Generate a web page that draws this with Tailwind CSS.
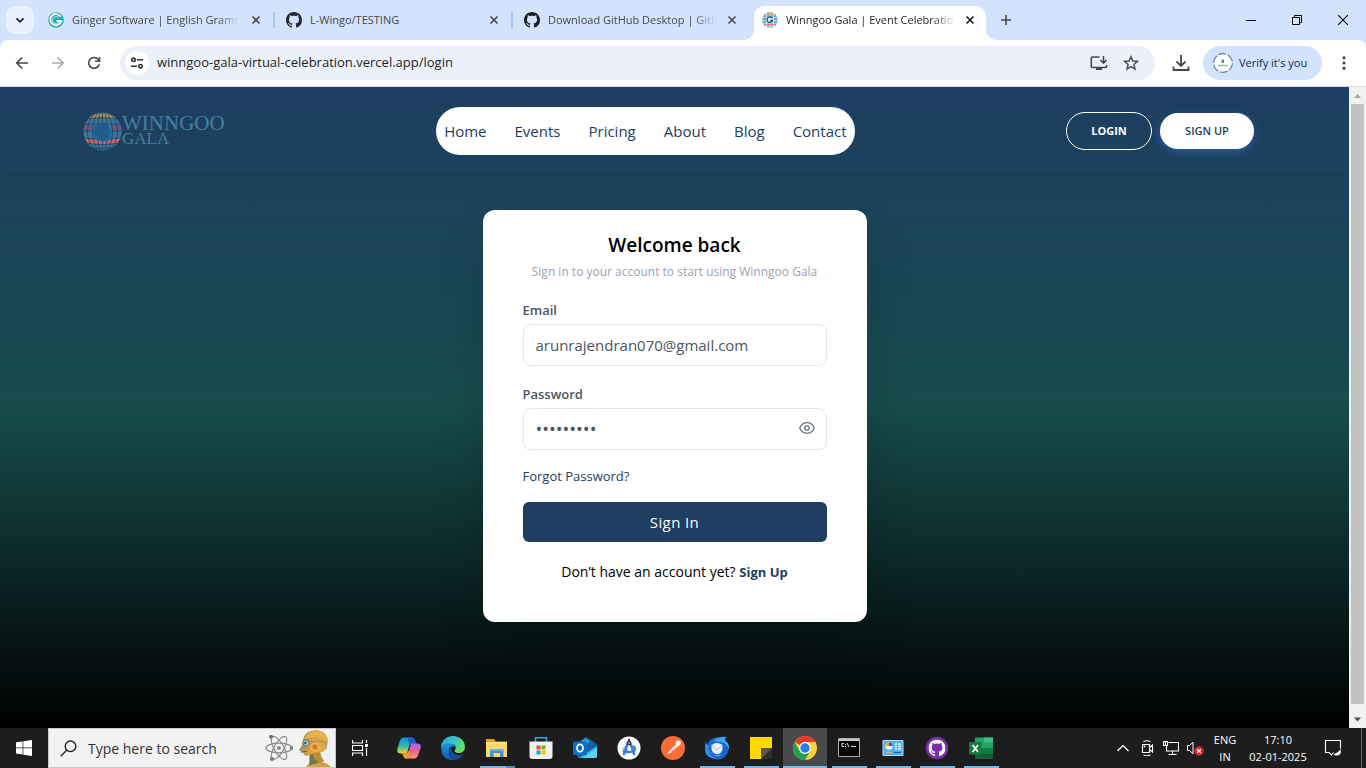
<!DOCTYPE html>
<html lang="en">
<head>
<meta charset="utf-8">
<meta name="viewport" content="width=device-width, initial-scale=1">
<title>Winngoo Gala | Event Celebration</title>
<script src="https://cdn.jsdelivr.net/npm/@tailwindcss/browser@4"></script>
</head>
<body class="flex h-screen flex-col overflow-hidden bg-black font-['Open_Sans','Noto_Sans',sans-serif]">
<svg class="hidden" aria-hidden="true">
  <symbol id="close" viewBox="0 0 16 16"><path d="M4.500 4.500l7 7M11.500 4.500l-7 7" stroke="currentColor" stroke-width="1.600" fill="none"/></symbol>
  <symbol id="github" viewBox="0 0 16 16"><path fill="currentColor" d="M8 0C3.58 0 0 3.58 0 8c0 3.54 2.29 6.53 5.47 7.59.4.07.55-.17.55-.38 0-.19-.01-.82-.01-1.49-2.01.37-2.53-.49-2.69-.94-.09-.23-.48-.94-.82-1.13-.28-.15-.68-.52-.01-.53.63-.01 1.08.58 1.23.82.72 1.21 1.87.87 2.33.66.07-.52.28-.87.51-1.07-1.78-.2-3.64-.89-3.64-3.95 0-.87.31-1.59.82-2.15-.08-.2-.36-1.02.08-2.12 0 0 .67-.21 2.2.82.64-.18 1.32-.27 2-.27s1.36.09 2 .27c1.53-1.04 2.2-.82 2.2-.82.44 1.1.16 1.92.08 2.12.51.56.82 1.27.82 2.15 0 3.07-1.87 3.75-3.65 3.95.29.25.54.73.54 1.48 0 1.07-.01 1.93-.01 2.2 0 .21.15.46.55.38A8.01 8.01 0 0 0 16 8c0-4.42-3.58-8-8-8z"/></symbol>
</svg>

<!-- Tab strip -->
<div class="flex h-10 shrink-0 items-center bg-[#d3e2fd] text-[11px] text-[#474747]">
  <button type="button" aria-label="Search tabs" class="ml-[6px] flex h-7 w-7 items-center justify-center rounded-[9px] bg-[#eaf1fe]">
    <svg class="size-4 text-[#1f1f1f]" viewBox="0 0 16 16"><path d="M4.500 6.300L8 9.800l3.500-3.500" stroke="currentColor" stroke-width="1.800" fill="none"/></svg>
  </button>
  <div class="ml-[3px] flex h-full items-center">
    <div class="flex w-[238px] items-center pl-[11px]">
      <svg class="size-4 shrink-0" viewBox="0 0 16 16"><circle cx="8" cy="8" r="7.800" fill="#26a9b8"/><path d="M12.600 4.600A5.600 5.600 0 1 0 13.300 9H8.500" stroke="#fff" stroke-width="1.800" fill="none"/><path d="M11 6.200A3.500 3.500 0 1 0 11 10" stroke="#fff" stroke-width=".7" fill="none"/></svg>
      <span class="ml-2 w-[168px] overflow-hidden whitespace-nowrap [mask-image:linear-gradient(to_right,#000_146px,transparent_168px)]">Ginger Software | English Grammar</span>
      <button type="button" aria-label="Close tab" class="ml-2 size-4"><svg class="size-4"><use href="#close"/></svg></button>
      <span class="ml-auto h-4 w-[2px] bg-[#a8c7fa]"></span>
    </div>
    <div class="flex w-[238px] items-center pl-[11px]">
      <svg class="size-4 shrink-0 text-[#24292f]"><use href="#github"/></svg>
      <span class="ml-2 w-[168px] overflow-hidden whitespace-nowrap">L-Wingo/TESTING</span>
      <button type="button" aria-label="Close tab" class="ml-2 size-4"><svg class="size-4"><use href="#close"/></svg></button>
      <span class="ml-auto h-4 w-[2px] bg-[#a8c7fa]"></span>
    </div>
    <div class="flex w-[238px] items-center pl-[11px]">
      <svg class="size-4 shrink-0 text-[#1b1f23]"><use href="#github"/></svg>
      <span class="ml-2 w-[168px] overflow-hidden whitespace-nowrap [mask-image:linear-gradient(to_right,#000_146px,transparent_168px)]">Download GitHub Desktop | GitHub</span>
      <button type="button" aria-label="Close tab" class="ml-2 size-4"><svg class="size-4"><use href="#close"/></svg></button>
    </div>
    <div class="relative mx-[3px] mt-[6px] flex h-[34px] w-[232px] items-center rounded-t-[10px] bg-white pb-[6px] pl-2 text-[#1f1f1f]">
      <svg class="absolute bottom-0 -left-[10px] size-[10px]" viewBox="0 0 10 10"><path d="M10 0v10H0A10 10 0 0 0 10 0z" fill="#fff"/></svg>
      <svg class="absolute -right-[10px] bottom-0 size-[10px]" viewBox="0 0 10 10"><path d="M0 0v10h10A10 10 0 0 1 0 0z" fill="#fff"/></svg>
      <svg class="size-4 shrink-0" viewBox="0 0 16 16"><circle cx="8" cy="8" r="7.800" fill="#6fa3c4"/><path d="M3.500 1.800h9l1 2h-11z" fill="#e0a458"/><path d="M1.500 11.500h13l-1.500 2.200H3z" fill="#e0615f"/><path d="M0 5.500h16M0 8.500h16M1 11.200h14M2 14h12M4.500 0v16M8 0v16M11.500 0v16" stroke="#eef4f8" stroke-width=".7"/><circle cx="8" cy="8" r="3.600" fill="#e6f0f6"/><path d="M10.300 6.400A2.800 2.800 0 1 0 10.500 8.500H8" stroke="#1d5f96" stroke-width="1.400" fill="none"/></svg>
      <span class="ml-2 w-[168px] overflow-hidden whitespace-nowrap [mask-image:linear-gradient(to_right,#000_146px,transparent_170px)]">Winngoo Gala | Event Celebration</span>
      <button type="button" aria-label="Close tab" class="ml-2 size-4"><svg class="size-4"><use href="#close"/></svg></button>
    </div>
  </div>
  <button type="button" aria-label="New tab" class="ml-[9px] size-4"><svg class="size-4" viewBox="0 0 16 16"><path d="M8 3v10M3 8h10" stroke="#474747" stroke-width="1.600"/></svg></button>
  <div class="ml-auto flex text-black">
    <button type="button" aria-label="Minimize" class="flex h-10 w-[46px] items-center justify-center"><svg class="size-[10px]" viewBox="0 0 10 10"><path d="M0 5.500h10" stroke="currentColor"/></svg></button>
    <button type="button" aria-label="Restore" class="flex h-10 w-[46px] items-center justify-center"><svg class="size-[10px]" viewBox="0 0 10 10"><path d="M.5 2.500h7v7h-7zM2.500 2.500v-2h7v7h-2" stroke="currentColor" fill="none"/></svg></button>
    <button type="button" aria-label="Close" class="flex h-10 w-[46px] items-center justify-center"><svg class="size-[10px]" viewBox="0 0 10 10"><path d="M0 0l10 10M10 0L0 10" stroke="currentColor" stroke-width="1.100"/></svg></button>
  </div>
</div>

<!-- Toolbar -->
<div class="shrink-0 bg-[#d3e2fd]">
<div class="flex h-[47px] items-center rounded-t-[8px] border-b border-[#dadce0] bg-white pr-[14px] pl-[14px] text-[#474747]">
  <button type="button" aria-label="Back" class="size-4"><svg class="size-4" viewBox="0 0 16 16"><path d="M14 8H3M8.200 2.500L2.700 8l5.500 5.500" stroke="currentColor" stroke-width="1.600" fill="none"/></svg></button>
  <button type="button" aria-label="Forward" class="ml-5 size-4 text-[#aaaaaa]"><svg class="size-4" viewBox="0 0 16 16"><path d="M2 8h11M7.800 2.500L13.300 8l-5.500 5.500" stroke="currentColor" stroke-width="1.600" fill="none"/></svg></button>
  <button type="button" aria-label="Reload" class="ml-5 size-4"><svg class="size-4" viewBox="0 0 16 16"><path d="M13.300 9.200A5.400 5.400 0 1 1 12.300 4.500L13.300 6" stroke="currentColor" stroke-width="1.600" fill="none"/><path d="M9 6.200h4.500V2" stroke="currentColor" stroke-width="1.600" fill="none"/></svg></button>
  <div class="ml-[18px] flex h-[34px] flex-1 items-center rounded-full bg-[#ebf0fa] pr-4 pl-[5px]">
    <button type="button" aria-label="View site information" class="flex size-6 shrink-0 items-center justify-center rounded-full bg-white"><svg class="size-[14px]" viewBox="0 0 14 14"><g stroke="#303030" stroke-width="1.600" fill="none"><circle cx="3.500" cy="3.800" r="1.700"/><path d="M7 3.800h6M1 10.200h6"/><circle cx="10.500" cy="10.200" r="1.700"/></g></svg></button>
    <input type="text" aria-label="Address and search bar" value="winngoo-gala-virtual-celebration.vercel.app/login" class="ml-2 min-w-0 flex-1 bg-transparent text-[13px] text-[#1f1f1f] outline-none">
    <button type="button" aria-label="Install app" class="size-[18px]"><svg class="size-[18px]" viewBox="0 0 18 18"><path d="M9.500 3H2.300Q1.300 3 1.300 4v8.500q0 1 1 1h13.400q1 0 1-1V11M13.500 2v7M10.500 6l3 3 3-3" stroke="currentColor" stroke-width="1.600" fill="none"/><path d="M6 13.500h6v2.500H6z" fill="currentColor"/></svg></button>
    <button type="button" aria-label="Bookmark this tab" class="ml-[15px] size-4"><svg class="size-4" viewBox="0 0 16 16"><path d="M8 1.700l1.800 4.300 4.700.4-3.600 3.100 1.100 4.500L8 11.600 4 14l1.100-4.500L1.500 6.400l4.700-.4z" stroke="currentColor" stroke-width="1.400" fill="none"/></svg></button>
  </div>
  <button type="button" aria-label="Downloads" class="ml-[17px] size-[18px]"><svg class="size-[18px]" viewBox="0 0 18 18"><path d="M9 1v10.500M4.500 7.500L9 12l4.500-4.500M1.500 12.500V16h15v-3.500" stroke="currentColor" stroke-width="1.800" fill="none"/></svg></button>
  <button type="button" class="ml-[13px] flex h-[34px] w-[119px] items-center rounded-full bg-[#d3e2fd] pl-[10px] text-[11px] whitespace-nowrap text-[#0a2a5e]">
    <svg class="size-5" viewBox="0 0 20 20"><circle cx="10" cy="10" r="9.500" fill="#fff"/><circle cx="10" cy="10" r="9.300" fill="none" stroke="#5b7fb5" stroke-width="1.200" stroke-dasharray="8 1.700"/><path d="M8.500 6.500h2.500v3.500H8.500z" fill="#5b84b0"/><path d="M5 12.500h10" stroke="#8cc4a4" stroke-width="1.500"/></svg>
    <span class="ml-[6px]">Verify it's you</span>
  </button>
  <button type="button" aria-label="Menu" class="ml-[14px] size-4"><svg class="size-4" viewBox="0 0 16 16" fill="currentColor"><circle cx="8" cy="2.800" r="1.600"/><circle cx="8" cy="8" r="1.600"/><circle cx="8" cy="13.200" r="1.600"/></svg></button>
</div>
</div>

<!-- Page -->
<div class="flex min-h-0 flex-1">
  <div class="min-w-0 flex-1 overflow-hidden bg-linear-to-b/srgb from-[#1e3e62] via-[#184c4c] to-black">
    <header class="flex h-[88px] items-center justify-between pr-[95px] pl-[83px] shadow-sm">
      <a href="#" aria-label="Winngoo Gala" class="flex items-center text-[#467f9f]">
        <svg class="size-[39px]" viewBox="0 0 39 39">
          <defs><clipPath id="globe"><circle cx="19.500" cy="19.500" r="19"/></clipPath></defs>
          <g clip-path="url(#globe)">
            <rect width="39" height="39" fill="#3a779b"/>
            <path d="M7 2.500q12.500-2 25 0V7q-12.500-2.500-25 0z" fill="#b58c4e"/>
            <path d="M0 12.500h10v6H0zM28 12.500h11v6H28z" fill="#6c5880"/>
            <path d="M0 25.500q19.500 4 39 0v5q-19.500 4-39 0z" fill="#c7646c"/>
            <g stroke="#1e4162" stroke-width=".8" fill="none"><path d="M0 7q19.500-3 39 0M0 12.500q19.500-2 39 0M0 19h39M0 25.500q19.500 4 39 0M0 30.500q19.500 4 39 0M0 35q19.500 3 39 0M19.500 0v39"/><ellipse cx="19.500" cy="19.500" rx="5" ry="21"/><ellipse cx="19.500" cy="19.500" rx="10" ry="21"/><ellipse cx="19.500" cy="19.500" rx="15" ry="20.500"/></g>
          </g>
          <circle cx="19.500" cy="19.500" r="8" fill="#235a86"/>
          <path d="M28 12.500q-8-3.500-13 .5-5.500 5-1.500 11 5 5.500 11.500 1.500v-4.500h-6q2-3 8.500-3v9.500q-8 4-14.500-.5-6-6.500-.5-13.500 6.500-6 15.500-1z" fill="#16689f"/>
        </svg>
        <span class="flex flex-col font-['Liberation_Serif',serif]"><span class="text-[21px] leading-4">WINNGOO</span><span class="text-[17px] leading-4">GALA</span></span>
      </a>
      <nav class="flex h-12 items-center gap-7 rounded-full bg-white px-2 text-[15px] text-[#1e3e62]">
        <a href="#">Home</a><a href="#">Events</a><a href="#">Pricing</a><a href="#">About</a><a href="#">Blog</a><a href="#">Contact</a>
      </nav>
      <div class="flex items-center gap-2 text-[11px]">
        <button type="button" class="h-[38px] w-[86px] rounded-full border border-white font-bold text-white">LOGIN</button>
        <button type="button" class="h-9 w-[94px] rounded-full bg-white font-semibold text-[#1e3e62] shadow-[0_3px_8px_#2b5c9c]">SIGN UP</button>
      </div>
    </header>
    <main class="flex justify-center pt-[35px]">
      <form class="flex w-full max-w-sm flex-col rounded-xl bg-white px-10 pt-[21px] pb-10 text-[13px] leading-5 shadow-2xl">
        <h1 class="text-center text-[19px] leading-7 font-semibold text-black">Welcome back</h1>
        <p class="mt-[3px] text-center text-[12px] leading-5 text-[#9ca3af]">Sign in to your account to start using Winngoo Gala</p>
        <label for="email" class="mt-[18px] font-semibold text-[#4b5563]">Email</label>
        <input id="email" type="email" value="arunrajendran070@gmail.com" class="mt-1 h-[42px] rounded-lg border border-gray-200 px-3 text-[15px] text-[#4b5563] outline-none">
        <label for="password" class="mt-[18px] font-semibold text-[#4b5563]">Password</label>
        <div class="relative mt-1">
          <input id="password" type="password" value="password1" class="block h-[42px] w-full rounded-lg border border-gray-200 px-3 pr-10 text-[18px] text-[#4b5563] outline-none">
          <button type="button" aria-label="Show password" class="absolute top-3 right-3 size-4 text-[#6b7280]"><svg class="size-4" viewBox="0 0 16 16" fill="none" stroke="currentColor" stroke-width="1.300"><path d="M.7 8Q3 2.700 8 2.700T15.300 8Q13 13.300 8 13.300T.7 8z"/><circle cx="8" cy="8" r="2.200"/></svg></button>
        </div>
        <a href="#" class="mt-4 self-start text-[#1e3e62]">Forgot Password?</a>
        <button type="submit" class="mt-4 h-10 rounded-md bg-[#1e3e62] text-[15px] tracking-wide text-white">Sign In</button>
        <p class="mt-5 text-center text-[14px] leading-5 text-black">Don’t have an account yet? <a href="#" class="text-[13px] font-bold text-[#1e3e62]">Sign Up</a></p>
      </form>
    </main>
  </div>
  <!-- Scrollbar -->
  <div class="flex w-[17px] shrink-0 flex-col items-center bg-[#f1f1f1]">
    <svg class="h-[17px] w-[17px]" viewBox="0 0 17 17"><path d="M5 11l3.500-4 3.500 4z" fill="#a3a3a3"/></svg>
    <div class="mb-[7px] w-[13px] flex-1 bg-[#c1c1c1]"></div>
    <svg class="h-[17px] w-[17px]" viewBox="0 0 17 17"><path d="M5 6.500l3.500 4 3.500-4z" fill="#505050"/></svg>
  </div>
</div>

<!-- Taskbar -->
<div class="flex h-10 shrink-0 bg-[#1d1d1d] text-white">
  <button type="button" aria-label="Start" class="flex w-12 items-center justify-center"><svg class="size-4" viewBox="0 0 16 16" fill="#fff"><path d="M0 2.300l6.600-.9v6.200H0zM7.300 1.300L16 0v7.600H7.300zM0 8.300h6.600v6.200L0 13.600zM7.300 8.300H16V16l-8.700-1.300z"/></svg></button>
  <div class="flex w-72 items-center border border-[#c8c8c8] bg-[#f2f2f2] pl-[11px]">
    <svg class="size-[17px] shrink-0" viewBox="0 0 17 17"><g stroke="#1f1f1f" stroke-width="1.300" fill="none"><circle cx="10.500" cy="6.300" r="5.300"/><path d="M6.700 10.200L.7 16.200"/></g></svg>
    <input type="text" aria-label="Search" placeholder="Type here to search" class="ml-[11px] min-w-0 flex-1 bg-transparent text-[14px] outline-none placeholder:text-[#333333]">
    <svg class="size-7 shrink-0" viewBox="0 0 28 28"><g stroke="#8c8c8c" stroke-width="1.200" fill="none"><ellipse cx="14" cy="14" rx="13" ry="4.800"/><ellipse cx="14" cy="14" rx="13" ry="4.800" transform="rotate(60 14 14)"/><ellipse cx="14" cy="14" rx="13" ry="4.800" transform="rotate(120 14 14)"/></g><circle cx="14" cy="14" r="2" fill="#8a8a8a"/><circle cx="6" cy="2.800" r="2" fill="#7d6b5c"/><circle cx="26.500" cy="14" r="1.800" fill="#5f8377"/><circle cx="7" cy="25" r="2" fill="#6d7d70"/></svg>
    <svg class="mr-1 ml-1 h-[37px] w-[34px] shrink-0 self-end" viewBox="0 0 34 37">
      <defs><linearGradient id="skin" x1="0" y1=".3" x2="1" y2=".5"><stop offset="0" stop-color="#7d8f78"/><stop offset=".45" stop-color="#dfa040"/><stop offset="1" stop-color="#e0ad4c"/></linearGradient></defs>
      <path d="M9 37q1-4 9-5 11-1 16 5z" fill="#d0a04a"/>
      <path d="M12 22l11-1q0 6 4 10-7 3-15 4 1-7 0-13z" fill="#6f7750"/>
      <path d="M15 22l8-1q0 6 4 10l-6 2q-5-5-6-11z" fill="#bd8b33"/>
      <path d="M6 10Q8 0 19 0q12 1 12 12-1 7-5 10l-9 1-7 3q-4-1-4-4l-4-2 3-5z" fill="url(#skin)"/>
      <path d="M8 8q4-8 12-7 10 1 11 10-6-4-13-4-6 0-10 3z" fill="#eab04c"/>
      <circle cx="9" cy="13" r="3.300" fill="#aebfb4" stroke="#5f7a76"/><circle cx="8.300" cy="13" r="1.200" fill="#3e5a5c"/>
      <path d="M12 12l10-1 7 2v6" stroke="#86937b" fill="none"/>
      <circle cx="18" cy="17" r="4" fill="#e2953a" stroke="#f3bc64"/><circle cx="18" cy="17" r="1.800" fill="#bd7428"/>
      <path d="M3.500 22l6-.5" stroke="#4f5c40" fill="none"/>
    </svg>
  </div>
  <button type="button" aria-label="Task view" class="ml-[2px] flex w-11 items-center justify-center"><svg class="size-4" viewBox="0 0 16 16"><path d="M.5 0v3h10V0M.5 16v-3h10v3M.5 5.500h10v5H.5zM14.500 0v3M14.500 8v8" stroke="#fff" stroke-width="1.200" fill="none"/><path d="M13 4h3v3h-3z" fill="#fff"/></svg></button>
  <div class="ml-[5px] flex">
    <!-- Copilot -->
    <button type="button" aria-label="Copilot" class="flex w-11 items-center justify-center"><svg class="size-6" viewBox="0 0 24 24"><defs><linearGradient id="cp1" x1="0" y1="0" x2="0" y2="1"><stop offset="0" stop-color="#1a8be6"/><stop offset=".5" stop-color="#25b7b0"/><stop offset="1" stop-color="#ecd832"/></linearGradient><linearGradient id="cp2" x1="0" y1="0" x2="0" y2="1"><stop offset="0" stop-color="#a56bea"/><stop offset=".5" stop-color="#ee5c9c"/><stop offset="1" stop-color="#f79e55"/></linearGradient></defs><path d="M7 1.500h8q2 0 3 3l1 3h-4q-2 0-3 3l-2 7H4q-5 0-3.500-5L3 4.500Q4 1.500 7 1.500z" fill="url(#cp1)"/><path d="M15 1.500q2 0 3 3l1 3h-4q-2 0-3 2 0-6-2-8z" fill="#205cd8"/><path d="M17 22.500H9q-2 0-3-4l-1-1h4q2 0 3-3l2-7h6q5 0 3.500 5L21 19.500q-1 3-4 3z" fill="url(#cp2)"/><path d="M5 17.500h4q2 0 3-3 0 6-2 8-3 0-4-3z" fill="#f39b30"/></svg></button>
    <!-- Edge -->
    <button type="button" aria-label="Edge" class="flex w-11 items-center justify-center"><svg class="size-6" viewBox="0 0 24 24"><defs><linearGradient id="ed1" x1="0" y1="0" x2="1" y2=".5"><stop offset="0" stop-color="#2aa5df"/><stop offset=".55" stop-color="#36c6c3"/><stop offset="1" stop-color="#69df5f"/></linearGradient><linearGradient id="ed2" x1="0" y1="0" x2="0" y2="1"><stop offset="0" stop-color="#2392dc"/><stop offset="1" stop-color="#1157a8"/></linearGradient></defs><path d="M0 12C0 5 5 0 12 0s12 5 12 11c0 4-3 6-6 6-4 0-5-2-4-3 2-3 0-6-4-6-5 0-9 2-10 4z" fill="url(#ed1)"/><path d="M0 12q2-5 7-5 5 0 7 4-5-2-6 3-1 6 5 10Q1 25 0 12z" fill="url(#ed2)"/><path d="M8 14q0-3 3-4-2 7 5 9 4 1 7-2-3 7-10 7-5-3-5-10z" fill="#124f91"/></svg></button>
    <!-- File Explorer -->
    <button type="button" aria-label="File Explorer" class="relative flex w-11 items-center justify-center"><svg class="size-6" viewBox="0 0 24 24"><path d="M1 3h8l2 2.500h11V10H1z" fill="#dda11d"/><path d="M1 6h21v15H1z" fill="#ffd869"/><path d="M1 6h21v2H1z" fill="#ffe38c"/><path d="M5 13h13.500v8H15v-4H8.500v4H5z" fill="#3e92d2"/><path d="M5 13h13.500v2H5z" fill="#63b2ea"/></svg><span class="absolute bottom-0 left-[5px] flex h-[2px] w-[35px] bg-[#5a8bbb]"><span class="w-[26px] bg-[#76b9ed]"></span></span></button>
    <!-- Store -->
    <button type="button" aria-label="Microsoft Store" class="flex w-11 items-center justify-center"><svg class="size-6" viewBox="0 0 24 24"><path d="M6.500 6V1.700h11V6" stroke="#32abdc" stroke-width="1.500" fill="none"/><path d="M.5 5.500h23V20q0 3-3 3h-17q-3 0-3-3z" fill="#f1f1f1"/><path d="M7.500 9.500h4v4h-4z" fill="#f04e23"/><path d="M12.500 9.500h4v4h-4z" fill="#79b80a"/><path d="M7.500 14.500h4v4h-4z" fill="#08a2ee"/><path d="M12.500 14.500h4v4h-4z" fill="#fcb805"/></svg></button>
    <!-- Outlook -->
    <button type="button" aria-label="Outlook" class="flex w-11 items-center justify-center"><svg class="size-6" viewBox="0 0 24 24"><path d="M4 7l9-6 11 7v12q0 2-2 2H6q-2 0-2-2z" fill="#155fa8"/><path d="M12 2l5 3-9 12-3-9z" fill="#2f93d7"/><path d="M24 8v12q0 2-2 2H6l18-12z" fill="#39b8ee"/><path d="M24 12v8q0 2-2 2H10z" fill="#57d5f8"/><rect y="5.500" width="14" height="13.500" rx="1.500" fill="#0f6cc6"/><ellipse cx="7" cy="12" rx="3" ry="3.700" stroke="#fff" stroke-width="1.700" fill="none"/></svg></button>
    <!-- Android Studio -->
    <button type="button" aria-label="Android Studio" class="flex w-11 items-center justify-center"><svg class="size-6" viewBox="0 0 24 24"><circle cx="12" cy="12" r="11.500" fill="#fff"/><path d="M5 12l3-2.500 3 2.500v6H6z" fill="#b9d7fb"/><path d="M16 9q4 1 3 6l-4-1z" fill="#34a866"/><path d="M11 6.500L6.500 19M13 6.500L17.500 19M6 14.500q6 3 12 0" stroke="#3c79e5" stroke-width="2.400" fill="none"/><circle cx="12" cy="7" r="2.300" fill="#293444"/><path d="M12 3v2" stroke="#293444" stroke-width="2"/><circle cx="12" cy="7" r=".8" fill="#fff"/></svg></button>
    <!-- Postman -->
    <button type="button" aria-label="Postman" class="flex w-11 items-center justify-center"><svg class="size-6" viewBox="0 0 24 24"><circle cx="12" cy="12" r="12" fill="#ff6c37"/><path d="M5 19l3-3.500 8-8 2 2-8 7z" fill="#fff"/><circle cx="17.300" cy="7" r="2.500" fill="#fff"/><path d="M5 19.500l4-2M10 16l6-6" stroke="#ff6c37" stroke-width=".7"/></svg></button>
    <!-- Thunderbird -->
    <button type="button" aria-label="Thunderbird" class="relative flex w-11 items-center justify-center"><svg class="size-6" viewBox="0 0 24 24"><circle cx="12.500" cy="12.500" r="11" fill="#1a66cc"/><path d="M8 5q5-5 14-4-2 1-2 3 5 4 4 10-3-9-11-8z" fill="#3ba0f2"/><path d="M1 5q0 4 3 5-2 9 7 13Q-1 22 0 11q0-3 1-6z" fill="#2c8ff0"/><path d="M6.500 9q5.500-4 11 0v4q-1 5-5.500 5t-5.500-5z" fill="#e8f2fc"/><path d="M6.500 9l5.500 5 5.500-5" stroke="#9bc3e8" fill="none"/><path d="M4 14q3 8 13 4-6 6-13-4z" fill="#5bb5f5"/></svg><span class="absolute bottom-0 left-[5px] h-[2px] w-[35px] bg-[#76b9ed]"></span></button>
    <!-- Sticky Notes -->
    <button type="button" aria-label="Sticky Notes" class="relative flex w-11 items-center justify-center"><svg class="size-6" viewBox="0 0 24 24"><path d="M1 1h22v22H1z" fill="#ffd900"/><path d="M12 12h11v11H12z" fill="#4a463c"/><path d="M23 12v11H12z" fill="#302e2b"/><path d="M12 12h11L12 23z" fill="#5b564a"/></svg><span class="absolute bottom-0 left-[5px] h-[2px] w-[35px] bg-[#76b9ed]"></span></button>
    <!-- Chrome -->
    <button type="button" aria-label="Chrome" class="relative flex w-11 items-center justify-center bg-[#4a4a4a]"><svg class="size-6" viewBox="0 0 24 24"><circle cx="12" cy="12" r="12" fill="#ffcd40"/><path d="M12 12L1.600 6A12 12 0 0 1 22.400 6H12z" fill="#e33b2e"/><path d="M1.600 6A12 12 0 0 0 12 24l5.200-9L12 12 6.800 15z" fill="#1fa055"/><circle cx="12" cy="12" r="6" fill="#fff"/><circle cx="12" cy="12" r="4.700" fill="#287ee8"/></svg><span class="absolute bottom-0 left-0 h-[2px] w-full bg-[#76b9ed]"></span></button>
    <!-- Command Prompt -->
    <button type="button" aria-label="Command Prompt" class="relative flex w-11 items-center justify-center"><svg class="size-6" viewBox="0 0 24 24"><path d="M1.500 2.500h21v18h-21z" fill="#050505" stroke="#a7adb3"/><path d="M2 3h20v2H2z" fill="#c5cbd0"/><path d="M7 7.500H5v3h2M8.500 8v1M8.500 10v1M10 7l2 4M14 10.500h5" stroke="#e2e2e2" fill="none"/></svg><span class="absolute bottom-0 left-[5px] h-[2px] w-[35px] bg-[#76b9ed]"></span></button>
    <!-- Control Panel -->
    <button type="button" aria-label="Control Panel" class="relative flex w-11 items-center justify-center"><svg class="size-6" viewBox="0 0 24 24"><path d="M2 4.500h20v15H2z" fill="#4eb3f0" stroke="#a6dcfa"/><circle cx="8" cy="10" r="3.700" fill="#ecf7ff"/><path d="M8 10V6.300a3.700 3.700 0 0 0-3.700 3.700z" fill="#f29c27"/><path d="M8 10h3.700A3.700 3.700 0 0 0 8 6.300z" fill="#216db5"/><path d="M14 8h2M17 8h3M14 10.500h2M17 10.500h3M14 13h2M17 13h3" stroke="#e9f8ff" stroke-width="1.300"/><path d="M5 16.500h6" stroke="#f3ad3d" stroke-width="1.200"/><path d="M12.500 16.500h7" stroke="#21679e" stroke-width="1.200"/></svg><span class="absolute bottom-0 left-[5px] h-[2px] w-[35px] bg-[#76b9ed]"></span></button>
    <!-- GitHub Desktop -->
    <button type="button" aria-label="GitHub Desktop" class="relative flex w-11 items-center justify-center"><svg class="size-6 text-white" viewBox="0 0 24 24"><circle cx="12" cy="12" r="11.200" fill="#7a2fa6"/><use href="#github" x="3.500" y="3.500" width="17" height="17"/></svg><span class="absolute bottom-0 left-[5px] h-[2px] w-[35px] bg-[#76b9ed]"></span></button>
    <!-- Excel -->
    <button type="button" aria-label="Excel" class="relative flex w-11 items-center justify-center"><svg class="size-6" viewBox="0 0 24 24"><path d="M6 1.500h18v21H6z" fill="#21a366"/><path d="M15 1.500h9v5h-9z" fill="#33c481"/><path d="M6 12h9v5.500H6z" fill="#107c41"/><path d="M15 12h9v5.500h-9z" fill="#107c41"/><path d="M6 17.500h18v5H6z" fill="#185c37"/><rect y="6" width="12.500" height="12.500" rx="1" fill="#107c41"/><path d="M3.500 9l5.500 7M9 9l-5.500 7" stroke="#fff" stroke-width="1.800"/></svg><span class="absolute bottom-0 left-[5px] h-[2px] w-[35px] bg-[#76b9ed]"></span></button>
  </div>
  <!-- Tray -->
  <div class="ml-auto flex items-center text-[11px]">
    <button type="button" aria-label="Show hidden icons" class="w-3"><svg class="size-3" viewBox="0 0 12 12"><path d="M.5 9L6 3.500 11.500 9" stroke="#fff" stroke-width="1.200" fill="none"/></svg></button>
    <svg class="ml-[10px] size-4" viewBox="0 0 16 16"><g stroke="#fff" stroke-width="1.100" fill="none"><path d="M3.500 4.500h7v8h-7zM10.500 7.500L13.500 5v7l-3-2.500M4.500 1.500q3.500-1.500 7 0M4.500 15q3.500 1.500 7 0"/><circle cx="5.500" cy="6.500" r=".4"/></g></svg>
    <svg class="ml-2 size-4" viewBox="0 0 16 16"><g stroke="#fff" stroke-width="1.100" fill="none"><path d="M5.500 2.500h10v8.500H3.500V6M9.500 11v3M5.500 14.500h8M.5 1.500h4v4h-4zM2.500 2v3"/></g></svg>
    <svg class="ml-2 h-4 w-[17px]" viewBox="0 0 17 16"><path d="M.5 5.500h2L6 2.200v11.600L2.500 10.500h-2z" stroke="#fff" fill="none"/><circle cx="12" cy="11" r="4.700" fill="#e3242b"/><path d="M10.200 9.200l3.600 3.600M13.800 9.200l-3.600 3.600" stroke="#fff" stroke-width="1.300"/></svg>
    <div class="ml-[5px] w-8 text-center leading-[17px]">ENG<br>IN</div>
    <div class="ml-[6px] w-[62px] text-center leading-[17px] whitespace-nowrap">17:10<br>02-01-2025</div>
    <button type="button" aria-label="Notifications" class="ml-[15px] size-[18px]"><svg class="size-[18px]" viewBox="0 0 18 18"><path d="M9.500 13.500L7.500 16l-2.500-2.500H1.500v-12h15v8" stroke="#fff" stroke-width="1.100" fill="none"/><path d="M16.500 10q1.500 6-3.500 6.500-3 0-3.500-1.500 4-.5 7-5z" fill="#fff"/></svg></button>
    <span class="mr-1 ml-[19px] h-10 w-px bg-[#666666]"></span>
  </div>
</div>
</body>
</html>
